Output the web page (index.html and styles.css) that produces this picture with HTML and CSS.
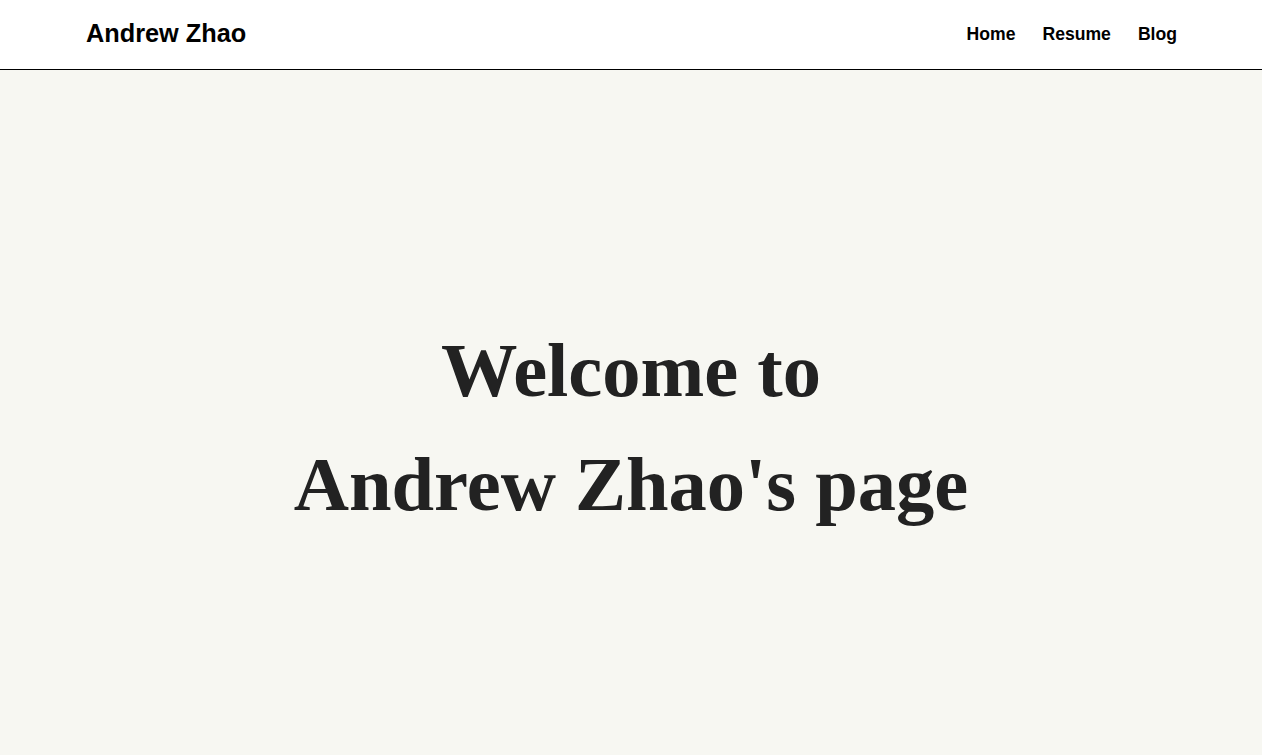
FILE: index.html
```html
<!DOCTYPE html>
<html>
<head>
<meta charset="utf-8">
<link rel="stylesheet" href="styles.css">
</head>
<body>
<header class="topbar">
  <div class="brand">Andrew Zhao</div>
  <nav class="nav">
    <a href="#">Home</a>
    <a href="#">Resume</a>
    <a href="#">Blog</a>
  </nav>
</header>
<main class="hero">
  <h1 class="title">Welcome to<br>Andrew Zhao's page</h1>
</main>
</body>
</html>
```
FILE: styles.css
```css
html, body {
  margin: 0;
  padding: 0;
  height: 100%;
}
body {
  background: #f7f7f2;
  font-family: "Liberation Sans", Arial, sans-serif;
  display: flex;
  flex-direction: column;
}
.topbar {
  background: #fff;
  height: 69px;
  border-bottom: 1px solid #000;
  display: flex;
  align-items: center;
  justify-content: space-between;
  padding: 0 85px 0 86px;
  box-sizing: content-box;
}
.brand {
  font-size: 25.3px;
  font-weight: bold;
  color: #000;
  margin-top: -2px;
}
.nav {
  display: flex;
  gap: 27px;
}
.nav a {
  font-size: 17.6px;
  font-weight: bold;
  color: #000;
  text-decoration: none;
}
.hero {
  flex: 1;
  display: flex;
  align-items: center;
  justify-content: center;
  padding-top: 30px;
}
.title {
  margin: 0;
  font-family: "Liberation Serif", "Times New Roman", serif;
  font-size: 76.5px;
  line-height: 114px;
  font-weight: bold;
  color: #222;
  text-align: center;
}
```
